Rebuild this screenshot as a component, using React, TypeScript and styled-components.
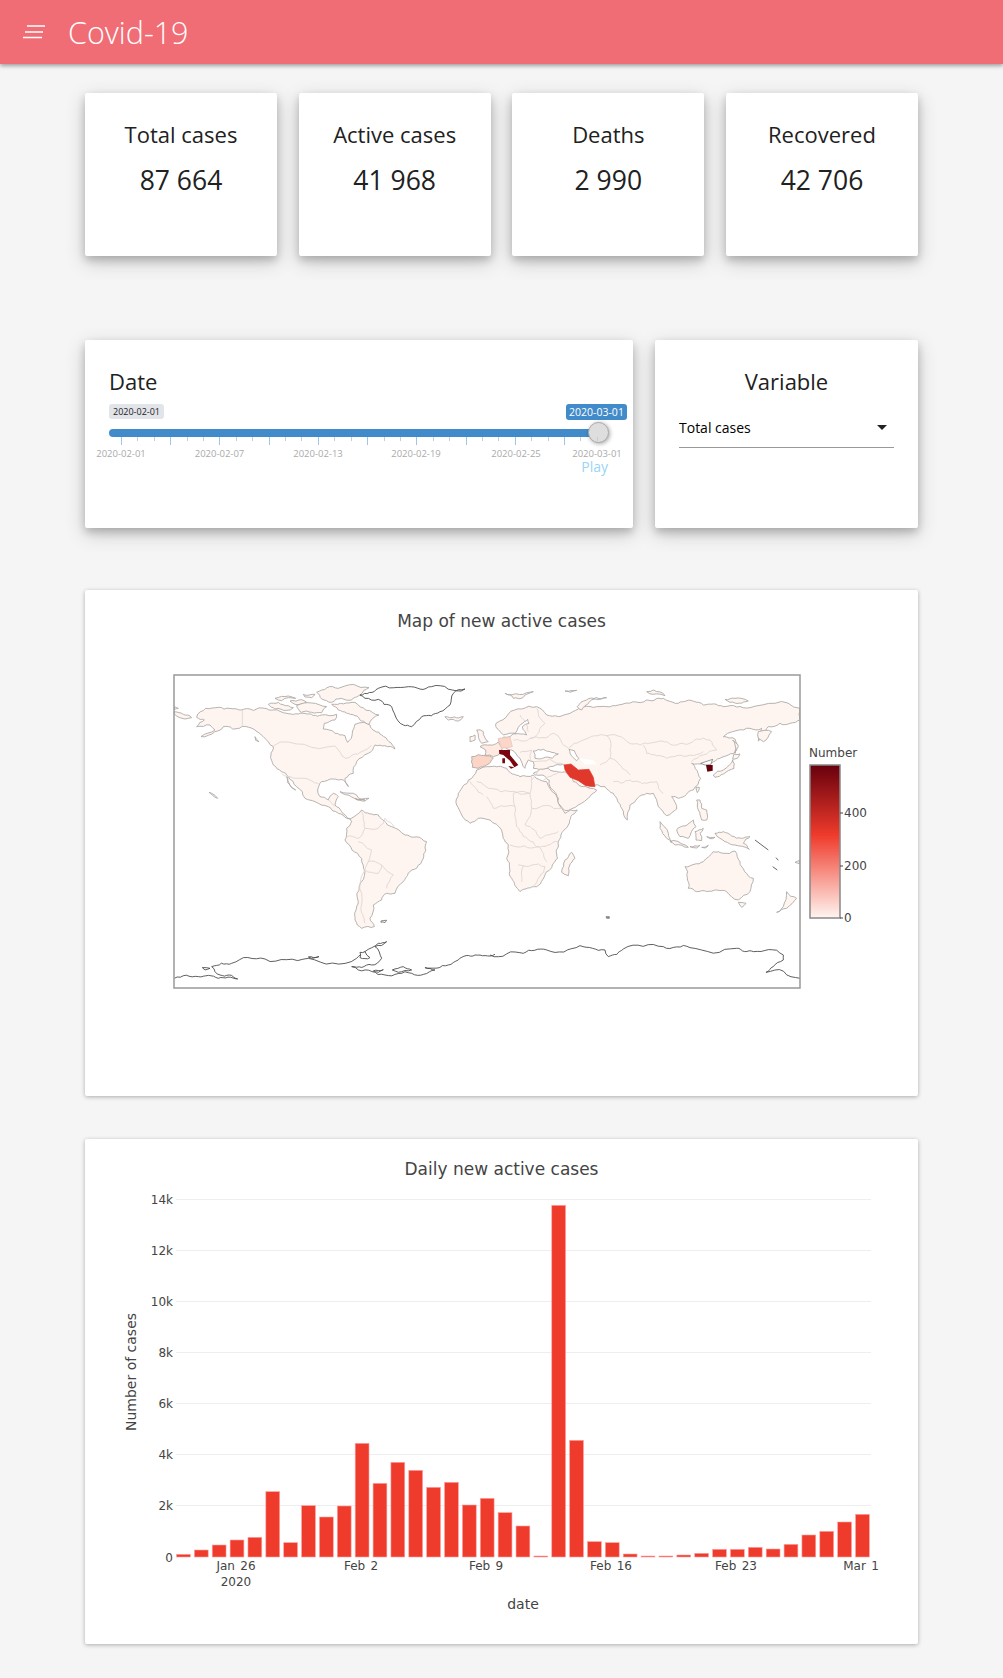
import type { ReactNode, SVGProps } from "react";
import styled, { createGlobalStyle } from "styled-components";

const GlobalStyle = createGlobalStyle`
  html, body {
    margin: 0;
    padding: 0;
    background: #f5f5f5;
    font-family: "Open Sans", "Noto Sans", sans-serif;
    color: #212121;
  }
`;

const stats = [
  { label: "Total cases", value: "87 664" },
  { label: "Active cases", value: "41 968" },
  { label: "Deaths", value: "2 990" },
  { label: "Recovered", value: "42 706" },
];

// bar tops, read off the chart at 3x, 1220 is the zero line
const barTops = [
  1213, 1200, 1185, 1170, 1162, 1025, 1178, 1067, 1101, 1068, 880, 1000, 937, 961, 1012, 997, 1065, 1045, 1088, 1128,
  1218, 166, 871, 1175, 1178, 1212, 1218, 1218, 1215, 1210, 1198, 1198, 1192, 1197, 1183, 1155, 1144, 1116, 1093,
];

const yTicks = [
  { label: "14k", y: 60 },
  { label: "12k", y: 111 },
  { label: "10k", y: 162 },
  { label: "8k", y: 213 },
  { label: "6k", y: 264 },
  { label: "4k", y: 315 },
  { label: "2k", y: 366 },
  { label: "0", y: 418 },
];

const xTicks = [
  { label: "Jan 26", x: 151 },
  { label: "Feb 2", x: 276 },
  { label: "Feb 9", x: 401 },
  { label: "Feb 16", x: 526 },
  { label: "Feb 23", x: 651 },
  { label: "Mar 1", x: 776 },
];

const sliderLabels = [
  { text: "2020-02-01", x: 12 },
  { text: "2020-02-07", x: 110.5 },
  { text: "2020-02-13", x: 209 },
  { text: "2020-02-19", x: 307 },
  { text: "2020-02-25", x: 407 },
  { text: "2020-03-01", x: 488 },
];

const LAND = "#fff5f0";
const COAST = "#aca7a5";
const BORDER = "#ded4d0";

// the traced outlines are coarse, so break each long edge up to get a coastline
function rough(d: string) {
  return d
    .split("M")
    .filter((part) => part.trim())
    .map((part) => {
      const closed = part.includes("Z");
      const pts = [...part.matchAll(/(-?\d+(?:\.\d+)?),(-?\d+(?:\.\d+)?)/g)].map((m) => [Number(m[1]), Number(m[2])]);
      if (closed) pts.push(pts[0]);
      const split = (a: number[], b: number[], depth: number): number[][] => {
        const dx = b[0] - a[0];
        const dy = b[1] - a[1];
        const len = Math.hypot(dx, dy);
        if (depth === 0 || len < 12) return [b];
        const noise = Math.sin(a[0] * 12.9898 + b[1] * 78.233 + depth) * 43758.5453;
        const amount = ((noise - Math.floor(noise)) - 0.5) * 0.28;
        const mid = [a[0] + dx / 2 - dy * amount, a[1] + dy / 2 + dx * amount];
        return [...split(a, mid, depth - 1), ...split(mid, b, depth - 1)];
      };
      const out: number[][] = [pts[0]];
      for (let i = 1; i < pts.length; i++) out.push(...split(pts[i - 1], pts[i], 3));
      return "M" + out.map((p) => `${p[0].toFixed(1)},${p[1].toFixed(1)}`).join(" L") + (closed ? "Z" : "");
    })
    .join(" ");
}

const Shape = ({ d, ...rest }: SVGProps<SVGPathElement> & { d: string }) => <path d={rough(d)} {...rest} />;

// origins of the tracings, all at 3x
const Americas = ({ children }: { children: ReactNode }) => <g transform="translate(-9,-10) scale(0.3333)">{children}</g>;
const Eastern = ({ children }: { children: ReactNode }) => <g transform="translate(316,-10) scale(0.3333)">{children}</g>;
const Europe = ({ children }: { children: ReactNode }) => <g transform="translate(291,15) scale(0.3333)">{children}</g>;
const Pacific = ({ children }: { children: ReactNode }) => <g transform="translate(486,55) scale(0.3333)">{children}</g>;

function WorldMap() {
  return (
    <g>
      <Americas>
        <g fill={LAND} stroke={COAST} strokeWidth="2.6" strokeLinejoin="round">
          <Shape d="M28,140 L55,148 L80,158 L60,162 L28,147Z M28,125 L40,130 L28,134Z" />
          <Shape d="M95,157 L122,130 L160,127 L230,135 L300,130 L325,135 L365,145 L420,145 L470,150 L515,148 L510,165 L478,175 L475,192 L510,205 L540,212 L548,232 L562,205 L570,178 L595,172 L615,180 L650,210 L672,230 L690,252 L660,242 L630,240 L610,265 L575,290 L565,325 L540,340 L550,365 L535,345 L505,342 L470,350 L458,375 L465,395 L490,405 L505,385 L520,395 L510,420 L530,440 L555,462 L545,460 L520,445 L490,425 L450,410 L420,400 L395,365 L370,335 L350,320 L325,300 L318,270 L325,245 L295,215 L270,195 L230,185 L175,185 L150,200 L108,215 L150,195 L135,180 L95,185 L118,165Z" />
          <Shape d="M365,335 L392,375 L380,368Z" fill="#fff" />
          <Shape d="M310,118 L340,112 L370,122 L385,128 L365,136 L330,132Z M330,100 L370,93 L392,100 L350,107Z M415,88 L450,88 L440,98 L420,96Z M375,108 L410,104 L425,112 L390,118Z" />
          <Shape d="M455,82 L520,70 L612,68 L585,90 L560,105 L500,112 L470,102Z" />
          <Shape d="M395,122 L440,114 L485,125 L470,143 L410,142Z" />
          <Shape d="M500,118 L570,112 L642,150 L612,178 L570,152 L520,135Z" />
          <Shape d="M525,380 L565,385 L600,405 L560,396Z M570,400 L612,400 L600,408Z" />
          <Shape d="M270,215 L282,230 L272,226Z M132,382 L140,385 L158,400 L148,396Z" />
          <Shape d="M840,155 L895,155 L880,168 L850,165Z" />
          <Shape d="M555,462 L590,435 L640,450 L680,485 L720,510 L785,530 L775,580 L755,610 L715,650 L690,685 L665,685 L650,705 L625,720 L615,760 L628,785 L590,790 L570,765 L580,710 L600,620 L590,580 L540,525 L545,490 L560,470Z" />
          <Shape d="M648,768 L665,766 L660,773 L648,772Z" stroke="#777" />
        </g>
        <g fill="none" stroke={BORDER} strokeWidth="2.6">
          <path d="M232,135 L232,185" />
          <Shape d="M325,243 L510,243 L540,280 L590,260 L620,240" />
          <Shape d="M350,325 L420,340 L460,355 M490,405 L510,425" />
          <Shape d="M590,440 L600,490 L580,520 L545,515 M600,490 L640,490 L660,460 M660,460 L690,490 M580,530 L620,555 L610,590 L650,600 L685,630 L665,670 M610,590 L590,720 L600,775 M650,600 L640,625 L600,615" />
        </g>
        <g fill="#fff" stroke="#454545" strokeWidth="2.6" strokeLinejoin="round">
          <Shape d="M585,90 L640,70 L730,65 L800,65 L900,72 L865,85 L855,120 L825,140 L770,155 L740,185 L715,180 L690,150 L680,125 L640,103 L600,100Z" />
          <Shape fill="none" d="M28,940 L100,935 L160,940 L218,942 L165,930 L140,905 L200,895 L300,882 L430,880 L575,880 L600,860 L640,835 L665,830 L630,845 L650,880 L620,900 L560,905 L580,915 L660,930 L740,925 L810,915 L780,908 L850,900 L880,885 L930,870 L990,868" />
          <Shape d="M682,915 L715,905 L740,915 L700,922Z M585,862 L600,860 L615,878 L585,878Z M112,908 L135,910 L120,915Z" />
          <Shape d="M430,876 L462,875 L440,880Z M625,918 L655,914 L640,922Z" />
        </g>
      </Americas>
      <Eastern>
        <g fill={LAND} stroke={COAST} strokeWidth="2.6" strokeLinejoin="round">
          <Shape d="M-40,315 L0,305 L50,310 L90,335 L130,330 L170,350 L215,430 L225,445 L262,435 L235,480 L205,530 L203,580 L170,620 L140,665 L90,680 L65,640 L50,580 L55,540 L35,495 L0,465 L-35,460 L-60,475 L-85,450 L-100,420 L-95,385 L-65,345Z" />
          <Shape d="M245,562 L255,580 L235,632 L215,622 L225,585Z" />
          <Shape d="M18,175 L55,147 L95,132 L140,125 L170,150 L205,155 L240,145 L270,125 L350,125 L385,120 L430,110 L470,105 L520,100 L580,110 L640,120 L700,125 L780,128 L930,130 L930,165 L870,175 L835,185 L805,228 L815,190 L780,190 L760,195 L700,215 L735,222 L740,255 L715,270 L690,280 L665,295 L640,295 L605,295 L632,340 L610,375 L565,400 L545,395 L560,432 L530,452 L505,425 L490,385 L470,385 L420,420 L412,465 L395,430 L370,385 L345,365 L300,365 L270,372 L240,350 L225,300 L170,312 L130,310 L130,290 L115,285 L105,310 L90,280 L65,255 L60,255 L25,225 L60,215 L80,205 L40,210 L30,200 L18,187Z" />
          <Shape d="M178,346 L130,325 L175,310 L225,320 L250,350 L300,370 L320,375 L300,395 L225,437 L205,415 L180,365Z" />
          <Shape d="M45,85 L130,80 L100,97 L70,100Z M225,78 L260,76 L240,82Z M262,125 L290,105 L350,98 L285,122 L275,135Z M470,80 L490,75 L525,92 L490,88Z M705,103 L735,100 L775,108 L720,112Z" />
          <Shape d="M585,605 L640,590 L670,560 L700,565 L735,558 L750,590 L790,640 L780,680 L745,705 L710,680 L680,675 L620,680 L595,670Z" />
          <Shape d="M745,712 L768,715 L755,727Z M890,680 L920,700 L890,730 L860,742 L880,725Z M915,592 L928,586 L928,596Z" />
        </g>
        <g fill="none" stroke={BORDER} strokeWidth="2.6">
          <Shape d="M235,250 L280,225 L350,212 L400,220 L450,240 L510,228 L560,240 L620,222 L660,225 L680,255 L640,270 L605,290" />
          <Shape d="M460,240 L470,265 L530,280 L600,270 L640,260 M350,212 L360,280 L330,300 M370,350 L420,345 L470,355 L500,350 L520,385 M360,280 L420,330" />
          <Shape d="M-40,350 L60,380 L120,385 L125,335 M120,385 L70,385 L75,425 L10,430 L-10,395 M-65,345 L-20,390 M120,385 L125,430 L215,430 M125,430 L105,480 L150,520 L205,500 M75,425 L90,500 L140,545 L205,530 M60,540 L145,545 L170,590 M85,600 L165,605 L130,665 M100,600 L95,650" />
          <Shape d="M130,290 L225,300 M150,310 L125,345 M225,320 L160,345 M90,150 L115,200 M140,130 L165,175 L120,220 M120,220 L190,205 L235,250 M70,225 L120,220 M90,262 L125,255 L120,290" />
        </g>
        <path d="M348,755 L358,755 L358,760 L350,760Z" fill="#999" stroke="#666" strokeWidth="2" />
        <Shape fill="none" stroke="#454545" strokeWidth="2.6" d="M0,870 L100,865 L170,855 L270,842 L345,855 L355,875 L400,852 L520,845 L600,848 L740,850 L790,860 L880,870 L880,885 L850,905 L828,922 L930,940" />
        <path fill="none" stroke="#666" strokeWidth="3" d="M795,525 L835,555 M858,578 L865,586 M848,605 L862,615" />
      </Eastern>
      <Europe>
        <g fill={LAND} stroke={COAST} strokeWidth="2.6" strokeLinejoin="round">
          <Shape d="M35,120 L55,125 L70,155 L50,160 L40,135Z M15,140 L30,135 L30,150 L15,155Z" />
          <Shape d="M45,170 L75,165 L100,155 L112,175 L100,195 L85,200 L60,195 L62,180Z" fill="#ffe9e0" />
          <path d="M100,145 L135,142 L142,170 L110,175Z" fill="#fdd6c8" stroke="#e6c9c0" />
          <Shape d="M20,200 L60,197 L85,205 L65,225 L40,235 L22,232Z" fill="#fdd5c6" />
        </g>
        <g fill="#fff" stroke={COAST} strokeWidth="2.6" strokeLinejoin="round">
          <Shape d="M150,132 L160,112 L178,95 L188,88 L192,100 L172,110 L180,125 L185,135Z" />
          <Shape d="M205,183 L235,178 L255,185 L280,192 L262,205 L210,205Z" />
          <Shape d="M312,178 L328,182 L342,205 L335,212 L322,200Z" />
          <path d="M345,207 L385,212 L392,222 L360,222Z" stroke="#fff" />
        </g>
        <path d="M102,180 L135,180 L135,195 L160,225 L148,232 L135,212 L115,195 L103,192Z M112,205 L120,205 L120,220 L112,220Z M130,228 L148,232 L138,236Z" fill="#7a0510" />
        <path d="M297,225 L318,222 L340,240 L372,238 L385,262 L390,290 L362,287 L340,272 L315,262 L300,240Z" fill="#e0392c" stroke="#e0392c" strokeWidth="2" />
      </Europe>
      <Pacific>
        <g fill={LAND} stroke={COAST} strokeWidth="2.6" strokeLinejoin="round">
          <Shape d="M160,135 L190,120 L208,105 L218,90 L222,115 L190,132 L165,142Z M222,72 L240,72 L232,85 L218,88Z M218,30 L235,50 L225,70 L225,45Z" />
          <Shape d="M295,5 L335,5 L310,35 L295,25Z" />
          <Shape d="M108,172 L118,172 L112,188Z M110,210 L120,210 L125,235 L140,240 L140,270 L125,270 L115,240Z" />
          <Shape d="M50,300 L75,288 L100,270 L108,290 L85,325 L60,320Z M105,305 L130,295 L120,310 L125,332 L108,330Z" />
          <Shape d="M0,275 L25,310 L35,335 L20,325 L0,295Z M30,335 L75,345 L85,352 L45,345Z M90,350 L120,346 L110,354Z M125,352 L145,346 L135,354Z M140,320 L165,322 L150,326Z" />
          <Shape d="M165,310 L190,305 L215,318 L245,325 L270,320 L250,340 L268,358 L225,345 L195,335 L180,325Z" />
        </g>
        <path d="M122,100 L158,88 L152,104 L135,105Z" fill="#fff" stroke="#666" strokeWidth="2" />
        <path d="M138,105 L158,105 L158,122 L142,125Z" fill="#67000d" />
      </Pacific>
    </g>
  );
}

export default function App() {
  return (
    <>
      <GlobalStyle />
      <AppBar>
        <MenuIcon width="24" height="24" viewBox="0 0 24 24">
          <path d="M5 6h18M3 12h18M1 17.5h19" stroke="#fff" strokeWidth="1.5" fill="none" />
        </MenuIcon>
        <AppTitle>Covid-19</AppTitle>
      </AppBar>
      <Page>
        <StatRow>
          {stats.map((stat) => (
            <StatCard key={stat.label}>
              <CardTitle>{stat.label}</CardTitle>
              <StatValue>{stat.value}</StatValue>
            </StatCard>
          ))}
        </StatRow>

        <ControlRow>
          <DateCard>
            <CardTitle $align="left">Date</CardTitle>
            <SliderBox>
              <MinChip>2020-02-01</MinChip>
              <MaxChip>2020-03-01</MaxChip>
              <SliderTrack />
              <SliderThumb />
              <TickRow>
                {Array.from({ length: 30 }, (_, i) => (
                  <Tick key={i} $major={i % 3 === 0} />
                ))}
              </TickRow>
              {sliderLabels.map((mark) => (
                <TickLabel key={mark.text} style={{ left: mark.x }}>
                  {mark.text}
                </TickLabel>
              ))}
            </SliderBox>
            <PlayRow>
              <PlayLink>Play</PlayLink>
            </PlayRow>
          </DateCard>
          <VariableCard>
            <CardTitle>Variable</CardTitle>
            <SelectBox>
              <span>Total cases</span>
              <SelectArrow />
            </SelectBox>
          </VariableCard>
        </ControlRow>

        <MapCard>
          <PlotSvg width="833" height="506" viewBox="0 0 833 506">
            <PlotTitle x="416.5" y="37" textAnchor="middle">
              Map of new active cases
            </PlotTitle>
            <defs>
              <clipPath id="map-clip">
                <rect x="0" y="0" width="626" height="313" />
              </clipPath>
              <linearGradient id="reds" x1="0" y1="1" x2="0" y2="0">
                <stop offset="0" stopColor="#fff5f0" />
                <stop offset="0.54" stopColor="#ef3b2c" />
                <stop offset="1" stopColor="#67000d" />
              </linearGradient>
            </defs>
            <g transform="translate(89,85)">
              <g clipPath="url(#map-clip)">
                <WorldMap />
              </g>
              <rect x="0" y="0" width="626" height="313" fill="none" stroke="#999" strokeWidth="1.5" />
            </g>
            <PlotLabel x="724" y="167">
              Number
            </PlotLabel>
            <rect x="725" y="175" width="30" height="153" fill="url(#reds)" stroke="#888" strokeWidth="1.5" />
            <path d="M755 223h3M755 276h3M755 328h3" stroke="#444" />
            <PlotLabel x="759" y="227">
              400
            </PlotLabel>
            <PlotLabel x="759" y="280">
              200
            </PlotLabel>
            <PlotLabel x="759" y="332">
              0
            </PlotLabel>
          </PlotSvg>
        </MapCard>

        <BarCard>
          <PlotSvg width="833" height="505" viewBox="0 0 833 505">
            <PlotTitle x="416.5" y="36" textAnchor="middle">
              Daily new active cases
            </PlotTitle>
            {yTicks.map((tick) => (
              <g key={tick.label}>
                {tick.label !== "0" && <line x1="91" x2="786" y1={tick.y + 0.5} y2={tick.y + 0.5} stroke="#eee" />}
                <PlotLabel x="88" y={tick.y + 5} textAnchor="end">
                  {tick.label}
                </PlotLabel>
              </g>
            ))}
            {barTops.map((top, i) => {
              const y = 11 + top / 3;
              return (
                <rect
                  key={i}
                  x={91.5 + i * 17.87}
                  y={y}
                  width={13.8}
                  height={Math.max(418 - y, 0.5)}
                  fill="#ef3b2c"
                  stroke="#ffa0a0"
                  strokeWidth="0.6"
                />
              );
            })}
            {xTicks.map((tick) => (
              <PlotLabel key={tick.label} x={tick.x} y="431" textAnchor="middle">
                {tick.label}
              </PlotLabel>
            ))}
            <PlotLabel x="151" y="447" textAnchor="middle">
              2020
            </PlotLabel>
            <AxisTitle x="438" y="470" textAnchor="middle">
              date
            </AxisTitle>
            <AxisTitle transform="translate(51,233) rotate(-90)" textAnchor="middle">
              Number of cases
            </AxisTitle>
          </PlotSvg>
        </BarCard>
      </Page>
    </>
  );
}

const AppBar = styled.header`
  display: flex;
  align-items: center;
  height: 64px;
  padding-left: 22px;
  background: #f16d75;
  box-shadow: 0 2px 4px rgba(0, 0, 0, 0.35);
`;

const MenuIcon = styled.svg`
  display: block;
  flex: none;
`;

const AppTitle = styled.div`
  margin-left: 22px;
  font-size: 30.5px;
  font-weight: 300;
  line-height: 1;
  color: #fff;
`;

const Page = styled.main`
  display: flex;
  flex-direction: column;
  padding: 29px 85px 34px;
`;

const Card = styled.section`
  background: #fff;
  border-radius: 2px;
  box-shadow: 0 4px 8px rgba(0, 0, 0, 0.2), 0 6px 20px rgba(0, 0, 0, 0.19);
`;

const StatRow = styled.div`
  display: grid;
  grid-template-columns: repeat(4, 192px);
  justify-content: space-between;
`;

const StatCard = styled(Card)`
  height: 163px;
  padding-top: 25px;
  box-sizing: border-box;
  text-align: center;
`;

const CardTitle = styled.div<{ $align?: string }>`
  font-size: 22px;
  line-height: 32px;
  text-align: ${(p) => p.$align ?? "center"};
`;

const StatValue = styled.div`
  margin-top: 12px;
  font-size: 26.5px;
  line-height: 36px;
`;

const ControlRow = styled.div`
  display: grid;
  grid-template-columns: 548px 263px;
  justify-content: space-between;
  margin-top: 84px;
`;

const DateCard = styled(Card)`
  height: 188px;
  box-sizing: border-box;
  padding: 25px 0 0 24px;
`;

const VariableCard = styled(Card)`
  height: 188px;
  box-sizing: border-box;
  padding: 25px 24px 0;
`;

const SliderBox = styled.div`
  position: relative;
  height: 54px;
  margin-top: 7px;
`;

const MinChip = styled.span`
  position: absolute;
  left: 0;
  top: 0;
  padding: 0 4px;
  line-height: 15px;
  font-size: 9px;
  background: #e1e4e9;
  border-radius: 3px;
  color: #222;
`;

const MaxChip = styled.span`
  position: absolute;
  left: 457px;
  top: 0;
  width: 61px;
  text-align: center;
  line-height: 16px;
  font-size: 10.5px;
  background: #428bca;
  border-radius: 3px;
  color: #fff;
`;

const SliderTrack = styled.div`
  position: absolute;
  left: 0;
  top: 25px;
  width: 489px;
  height: 8px;
  border-radius: 4px;
  background: #428bca;
`;

const SliderThumb = styled.div`
  position: absolute;
  left: 479px;
  top: 18px;
  width: 21px;
  height: 21px;
  box-sizing: border-box;
  border-radius: 50%;
  background: #dedede;
  border: 1px solid #aaa;
  box-shadow: 1px 1px 4px rgba(0, 0, 0, 0.35);
`;

const TickRow = styled.div`
  position: absolute;
  left: 12px;
  top: 33px;
  width: 477px;
  display: flex;
  justify-content: space-between;
`;

const Tick = styled.i<{ $major: boolean }>`
  display: block;
  width: 1px;
  height: ${(p) => (p.$major ? "8px" : "4px")};
  background: ${(p) => (p.$major ? "#9fc5e8" : "#ccc")};
`;

const TickLabel = styled.span`
  position: absolute;
  top: 44px;
  transform: translateX(-50%);
  font-size: 9.5px;
  line-height: 12px;
  color: #aaa;
  white-space: nowrap;
`;

const PlayRow = styled.div`
  display: flex;
  justify-content: flex-end;
  padding-right: 25px;
`;

const PlayLink = styled.span`
  font-size: 14px;
  line-height: 18px;
  color: #9ad5f3;
`;

const SelectBox = styled.div`
  display: flex;
  align-items: center;
  justify-content: space-between;
  height: 26px;
  margin-top: 17px;
  padding: 0 7px 7px 0;
  border-bottom: 1px solid #999;
  font-size: 14px;
  color: #000;
`;

const SelectArrow = styled.i`
  width: 0;
  height: 0;
  border-left: 5px solid transparent;
  border-right: 5px solid transparent;
  border-top: 5px solid #222;
`;

const MapCard = styled(Card)`
  height: 506px;
  margin-top: 62px;
  box-shadow: 0 1px 4px rgba(0, 0, 0, 0.3);
`;

const BarCard = styled(Card)`
  height: 505px;
  margin-top: 43px;
  box-shadow: 0 1px 4px rgba(0, 0, 0, 0.3);
`;

const PlotSvg = styled.svg`
  display: block;
  font-family: "DejaVu Sans", Verdana, sans-serif;
`;

const PlotTitle = styled.text`
  font-size: 17px;
  fill: #444;
`;

const PlotLabel = styled.text`
  font-size: 12px;
  word-spacing: 1.5px;
  fill: #444;
`;

const AxisTitle = styled.text`
  font-size: 14px;
  fill: #444;
`;
